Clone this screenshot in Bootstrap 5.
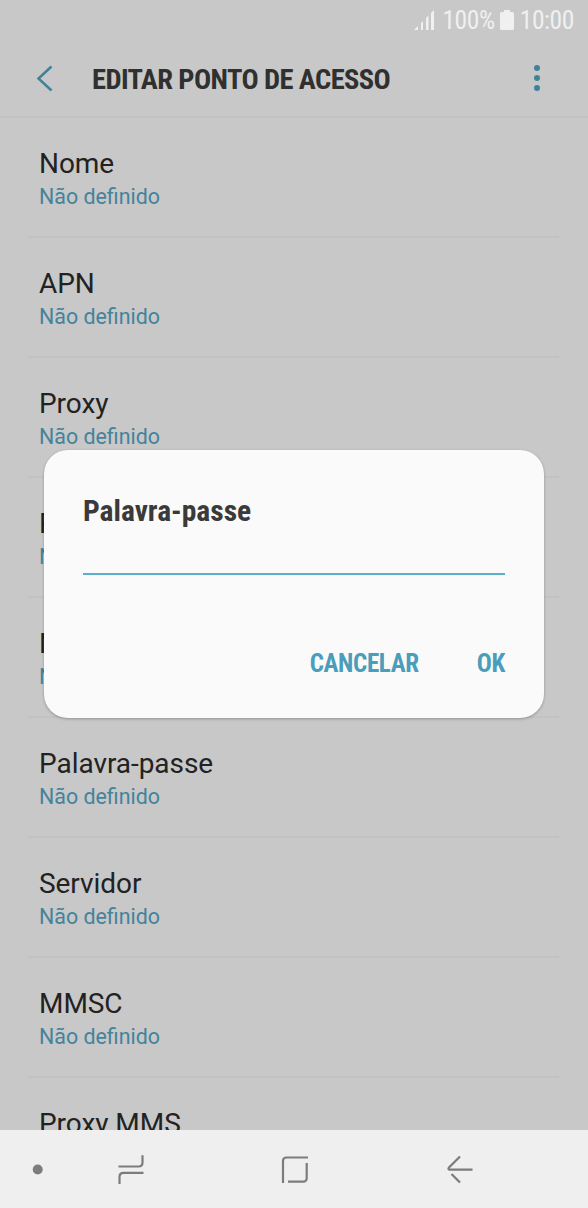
<!DOCTYPE html>
<html lang="pt">
<head>
<meta charset="utf-8">
<meta name="viewport" content="width=device-width, initial-scale=1">
<title>Editar ponto de acesso</title>
<link href="https://cdn.jsdelivr.net/npm/bootstrap@5.3.0/dist/css/bootstrap.min.css" rel="stylesheet">
<style>
  body { font-family: Roboto, sans-serif; background: #c8c8c8; }
  .phone { width: 588px; height: 1208px; background: #c8c8c8; }
  .condensed { font-family: "Roboto Condensed", Roboto, sans-serif; font-stretch: 75%; white-space: nowrap; }
  .status-bar { height: 40px; padding-right: 14px; font-size: 25.5px; letter-spacing: -.4px; line-height: 41px; color: #f0f0f0; }
  .signal { margin: 10px 7px 0 0; }
  .battery { margin: 10px 6px 0 5px; }
  .app-bar { height: 78px; border-bottom: 2px solid #c2c2c2; }
  .app-title { font-size: 28.5px; letter-spacing: -.6px; line-height: 40px; font-weight: 700; color: #303030; margin: 4px 0 0 38px; }
  .settings { margin: 0 29px 0 28px; }
  .setting { height: 120px; padding: 28px 0 0 11px; border-bottom: 2px solid #c2c2c2; }
  .setting-name { font-size: 28px; letter-spacing: -.05px; line-height: 36px; color: #222; }
  .setting-value { font-size: 21.4px; line-height: 30px; color: #44839b; }
  .dialog-box { left: 44px; top: 450px; width: 500px; height: 268px; border-radius: 24px; background: #fafafa; padding: 41px 39px 0; box-shadow: 0 1px 3px rgba(0,0,0,.28); }
  .dialog-title { font-size: 29.5px; line-height: 40px; font-weight: 700; color: #3a3a3a; }
  .field { height: 44px; border: 0; border-bottom: 2px solid #5bb0c9; background: transparent; outline: 0; padding: 0; }
  .actions { margin-top: 71px; gap: 58px; }
  .action { font-size: 25px; letter-spacing: -.35px; line-height: 36px; font-weight: 700; color: #4a9dbb; border: 0; padding: 0; background: transparent; }
  .nav-keys { height: 78px; background: #efefef; padding-left: 32px; }
</style>
</head>
<body>
<div class="phone position-relative overflow-hidden d-flex flex-column">
  <div class="status-bar condensed d-flex justify-content-end flex-shrink-0">
    <svg class="signal" width="21" height="20" viewBox="0 0 21 20" fill="#f0f0f0"><path d="M0 20L4 16v4zM7 13l2-2v9H7zM12 8l2.500-2.500V20H12zM17 3l3-3v20h-3z"/></svg>
    <span>100%</span>
    <svg class="battery" width="14" height="20" viewBox="0 0 14 20" fill="#f0f0f0"><path d="M4 0h6v2h2.500Q14 2 14 3.500V18.500Q14 20 12.500 20h-11Q0 20 0 18.500V3.500Q0 2 1.500 2H4z"/></svg>
    <span>10:00</span>
  </div>
  <header class="app-bar d-flex align-items-center flex-shrink-0">
    <svg class="ms-4" width="30" height="30" viewBox="24 63 30 30" fill="none" stroke="#3f8299" stroke-width="2.500"><path d="M51.500 66.500L38.500 78.500L51.500 90.500"/></svg>
    <h1 class="app-title condensed flex-grow-1">EDITAR PONTO DE ACESSO</h1>
    <svg class="me-5" width="6" height="26" viewBox="0 0 6 26" fill="#3f8299"><circle cx="3" cy="3" r="3"/><circle cx="3" cy="13" r="3"/><circle cx="3" cy="23" r="3"/></svg>
  </header>
  <main class="settings flex-grow-1 overflow-hidden">
    <div class="setting"><div class="setting-name">Nome</div><div class="setting-value">Não definido</div></div>
    <div class="setting"><div class="setting-name">APN</div><div class="setting-value">Não definido</div></div>
    <div class="setting"><div class="setting-name">Proxy</div><div class="setting-value">Não definido</div></div>
    <div class="setting"><div class="setting-name">Porta</div><div class="setting-value">Não definido</div></div>
    <div class="setting"><div class="setting-name">Nome de utilizador</div><div class="setting-value">Não definido</div></div>
    <div class="setting"><div class="setting-name">Palavra-passe</div><div class="setting-value">Não definido</div></div>
    <div class="setting"><div class="setting-name">Servidor</div><div class="setting-value">Não definido</div></div>
    <div class="setting"><div class="setting-name">MMSC</div><div class="setting-value">Não definido</div></div>
    <div class="setting"><div class="setting-name">Proxy MMS</div></div>
  </main>
  <nav class="nav-keys d-flex flex-shrink-0">
    <svg width="450" height="78" viewBox="32 1130 450 78" fill="none" stroke="#7c7c7c" stroke-width="2.200">
      <circle cx="37.700" cy="1169.500" r="5" fill="#7c7c7c" stroke="none"/>
      <path d="M118.500 1166.500H138.500Q142.500 1166.500 142.500 1162.500V1155.300M143.500 1172.800H123.500Q119.500 1172.800 119.500 1176.800V1184"/>
      <path d="M308 1157.500H286.500Q283 1157.500 283 1161V1183M306.700 1163V1178Q306.700 1181.700 303 1181.700H288"/>
      <path d="M472.500 1169.700H450Q447.500 1169.500 449 1167.500L460 1156.500M451.500 1174L460 1182.500"/>
    </svg>
  </nav>
  <section class="dialog-box position-absolute" role="dialog">
    <div class="dialog-title condensed">Palavra-passe</div>
    <input class="field d-block w-100" type="text" aria-label="Palavra-passe">
    <div class="actions d-flex justify-content-end">
      <button class="action condensed">CANCELAR</button>
      <button class="action condensed">OK</button>
    </div>
  </section>
</div>
<script src="https://cdn.jsdelivr.net/npm/bootstrap@5.3.0/dist/js/bootstrap.bundle.min.js"></script>
</body>
</html>
